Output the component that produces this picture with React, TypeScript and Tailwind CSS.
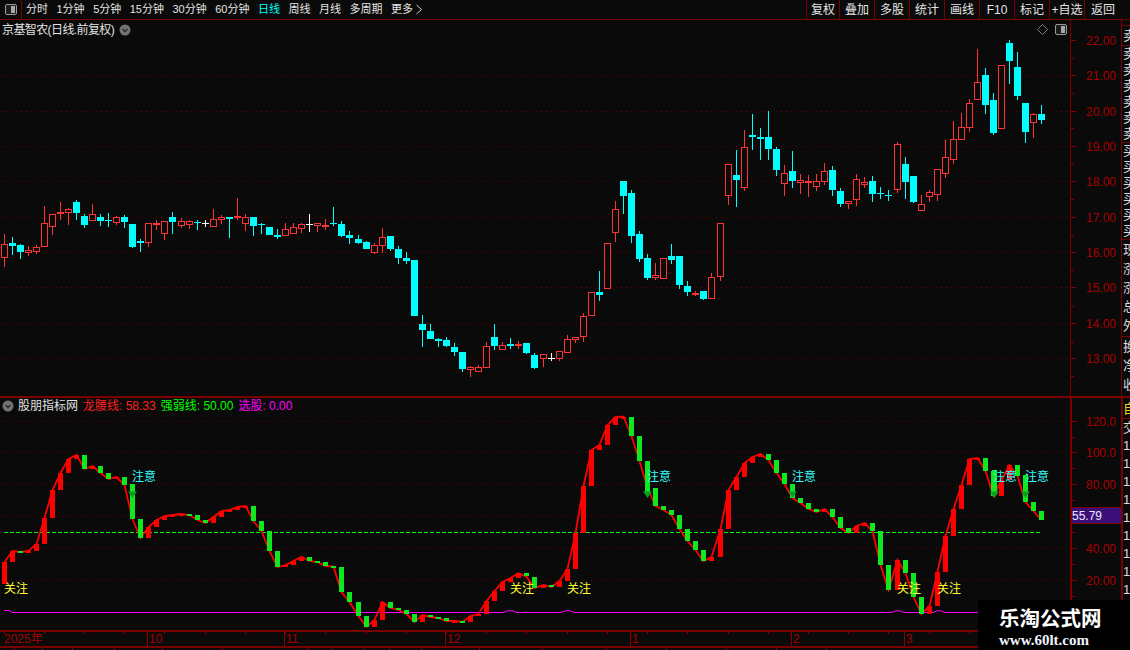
// candle rows are screen y values read off the chart: [bodyTop, bodyBottom, wickTop, wickBottom, kind]
type Kind = "r" | "c" | "w";
type Row = [number, number, number, number, Kind];

const rows = (yOff: number, list: Row[]): Row[] =>
  list.map(([a, b, c, d, k]) => [yOff + a / 3, yOff + b / 3, yOff + c / 3, yOff + d / 3, k]);

const candles: Row[] = [
  ...rows(190, [
    [162, 203, 132, 230, "r"], [159, 167, 141, 195, "c"], [165, 186, 162, 207, "c"], [180, 188, 168, 198, "r"],
    [172, 185, 165, 192, "r"], [99, 170, 48, 170, "r"], [72, 110, 72, 135, "r"], [67, 72, 36, 90, "r"],
    [57, 68, 54, 105, "r"], [36, 69, 30, 90, "c"], [78, 105, 72, 114, "c"], [72, 93, 42, 93, "r"],
    [81, 93, 72, 108, "c"], [90, 93, 69, 111, "c"], [81, 99, 78, 105, "r"], [81, 96, 75, 114, "c"],
    [102, 171, 102, 174, "c"], [154, 158, 147, 186, "c"], [99, 159, 99, 171, "r"], [99, 104, 90, 120, "r"],
    [93, 132, 93, 150, "r"], [81, 96, 66, 132, "c"], [93, 108, 84, 114, "r"], [93, 105, 90, 117, "r"],
    [96, 99, 90, 120, "c"], [99, 102, 90, 111, "w"], [87, 111, 57, 111, "r"], [81, 90, 75, 102, "r"],
    [81, 87, 81, 144, "c"], [78, 83, 24, 90, "r"], [81, 102, 72, 123, "r"], [81, 108, 81, 138, "c"],
    [102, 105, 99, 132, "c"], [111, 135, 111, 135, "c"], [135, 141, 117, 147, "c"],
    [118, 137, 99, 137, "r"], [112, 131, 99, 131, "r"], [103, 116, 99, 129, "r"], [102, 105, 72, 126, "w"],
    [100, 107, 100, 126, "r"], [105, 110, 87, 120, "r"], [99, 102, 51, 108, "c"], [102, 138, 93, 141, "c"],
    [135, 144, 123, 162, "c"], [147, 159, 135, 162, "c"], [156, 177, 153, 177, "c"], [165, 189, 159, 192, "r"],
    [141, 168, 114, 189, "r"], [138, 177, 138, 183, "c"], [177, 204, 168, 222, "c"], [204, 213, 186, 222, "c"],
    [210, 378, 210, 378, "c"], [402, 420, 375, 471, "c"], [423, 447, 402, 447, "c"], [447, 453, 444, 471, "c"],
    [450, 468, 441, 471, "c"], [471, 486, 459, 498, "c"], [486, 537, 486, 546, "c"], [531, 540, 528, 561, "r"],
    [531, 545, 525, 545, "r"], [468, 533, 456, 533, "r"], [441, 468, 402, 480, "c"], [465, 480, 456, 480, "r"],
    [462, 468, 444, 477, "c"], [462, 468, 453, 477, "r"], [459, 489, 459, 492, "c"], [495, 534, 489, 537, "c"],
    [492, 507, 492, 531, "r"], [505, 508, 489, 513, "w"], [483, 507, 483, 513, "r"],
  ]),
  ...rows(280, [
    [178, 220, 165, 220, "r"], [172, 181, 172, 190, "r"], [109, 172, 99, 186, "r"], [37, 109, 37, 109, "r"],
  ]),
  ...rows(100, [
    [576, 585, 513, 603, "c"], [430, 566, 430, 566, "r"], [328, 398, 303, 426, "r"], [243, 288, 243, 342, "c"],
    [279, 408, 270, 429, "c"], [402, 477, 393, 486, "c"], [474, 534, 462, 540, "c"], [526, 533, 489, 540, "r"],
    [475, 536, 475, 536, "r"], [468, 480, 432, 492, "c"], [468, 555, 468, 567, "c"], [558, 576, 543, 588, "c"],
    [579, 585, 573, 588, "r"], [573, 597, 573, 600, "c"], [531, 596, 519, 596, "r"], [370, 530, 370, 543, "r"],
    [193, 287, 193, 315, "r"], [225, 240, 150, 321, "c"], [141, 263, 90, 273, "r"], [105, 111, 42, 150, "c"],
    [111, 117, 84, 180, "c"], [111, 147, 33, 180, "c"], [147, 210, 141, 228, "c"], [219, 251, 195, 288, "r"],
    [213, 243, 153, 264, "c"], [240, 248, 222, 282, "r"], [243, 249, 225, 291, "r"], [244, 260, 222, 273, "r"],
    [213, 245, 189, 255, "r"], [210, 270, 198, 288, "c"],
  ]),
  ...rows(30, [
    [483, 522, 474, 531, "c"], [514, 521, 514, 537, "r"], [448, 509, 432, 528, "r"], [457, 464, 441, 474, "r"],
    [453, 492, 438, 516, "c"], [489, 492, 471, 507, "c"], [496, 499, 480, 513, "c"], [343, 479, 336, 489, "r"],
    [402, 456, 381, 507, "c"], [438, 516, 438, 519, "c"], [523, 542, 495, 542, "r"], [487, 500, 480, 516, "r"],
    [418, 494, 418, 513, "r"], [382, 431, 330, 444, "r"], [328, 389, 273, 402, "r"], [292, 329, 249, 329, "r"],
    [220, 293, 207, 306, "r"], [157, 209, 57, 209, "r"], [135, 225, 114, 252, "c"], [210, 309, 189, 315, "c"],
    [106, 296, 106, 296, "r"], [39, 93, 30, 162, "c"], [111, 198, 66, 210, "c"], [219, 306, 219, 339, "c"],
    [253, 278, 249, 324, "r"], [252, 270, 225, 282, "c"],
  ]),
];

const lineY = [
  ...[516, 483, 486, 483, 462, 384, 300, 249, 207, 195, 237, 228, 249, 267, 261, 285, 387, 444, 411, 390, 378, 375, 372, 375, 390, 399, 381, 363, 360, 351, 348, 393, 423, 483, 531, 525, 513].map((v) => 390 + v / 3),
  ...[470, 483, 486, 498, 500, 576, 606, 648, 681, 660, 606, 624, 630, 642, 666, 645, 651, 654, 663, 663, 666, 648, 642, 603, 573, 546, 534, 520, 530, 564, 555, 561, 543, 507, 400, 258, 150, 135, 75, 51,
    50, 108, 183, 264, 318, 330, 345, 387, 423, 450, 483, 471, 387, 270, 231, 189, 171, 162, 180, 219, 252, 294, 309, 327, 336, 327, 351, 384, 399, 378, 369, 393, 495, 570, 480, 519, 591].map((v) => 400 + v / 3),
  ...[672, 648, 546, 438, 357, 285, 207, 204, 243, 318, 270, 225, 258, 336, 363, 390].map((v) => 390 + v / 3),
];

const xOf = (i: number) => 4 + 8 * i + Math.floor((i + 1) / 22.38);

const cjk = "font-['Liberation_Sans','Noto_Sans_CJK_SC',sans-serif]";

const leftTabs = ["分时", "1分钟", "5分钟", "15分钟", "30分钟", "60分钟", "日线", "周线", "月线", "多周期"];
const rightTabs = ["复权", "叠加", "多股", "统计", "画线", "F10", "标记", "+自选"];

function PanelIcon({ size = 12 }: { size?: number }) {
  return (
    <svg width={size} height={size - 1} viewBox="0 0 12 11">
      <rect x="0.5" y="0.5" width="11" height="10" rx="1.5" fill="#1c1c1c" stroke="#9a9a9a" />
      <rect x="6" y="2" width="4" height="7" fill="#a8a8a8" />
    </svg>
  );
}

function RoundChevron() {
  return (
    <svg width="12" height="12" viewBox="0 0 12 12" className="shrink-0">
      <circle cx="6" cy="6" r="5.5" fill="#737373" />
      <path d="M3.5 5l2.5 2.5L8.5 5" fill="none" stroke="#2a2a2a" strokeWidth="1.3" />
    </svg>
  );
}

function Toolbar() {
  return (
    <div className={`flex h-5 shrink-0 border-b border-[#7a0000] text-[11px] text-[#e4e4e4] ${cjk}`}>
      <div className="flex w-[22px] items-center justify-center border-r border-[#7a0000]">
        <PanelIcon />
      </div>
      <div className="flex items-center gap-[8.5px] pl-[4px]">
        {leftTabs.map((t) => (
          <span key={t} className={t === "日线" ? "text-[#00ffff]" : ""}>
            {t}
          </span>
        ))}
        <span className="flex items-center gap-[3px]">
          更多
          <svg width="6" height="11" viewBox="0 0 6 11">
            <path d="M0.5 1l5 4.5-5 4.5" fill="none" stroke="#cfcfcf" />
          </svg>
        </span>
      </div>
      <div className="ml-auto flex">
        {rightTabs.map((t) => (
          <span key={t} className={`flex h-full items-center justify-center border-l border-[#7a0000] text-[12px] ${t === "复权" ? "w-[33px]" : "w-[35px]"}`}>
            {t}
          </span>
        ))}
        <span className="flex h-full w-[46px] items-center border-l border-[#7a0000] pl-[6px] text-[12px]">返回</span>
      </div>
    </div>
  );
}

function DottedGrid({ ys }: { ys: number[] }) {
  return (
    <>
      {ys.map((y) => (
        <line key={y} x1="1" x2="1070" y1={y + 0.5} y2={y + 0.5} stroke="#6e0000" strokeDasharray="1 4" />
      ))}
    </>
  );
}

function PriceChart() {
  return (
    <svg width="1070" height="376" viewBox="0 20 1070 376" className="shrink-0">
      <DottedGrid ys={[75, 111, 146, 181, 217, 252, 287, 323, 358]} />
      {candles.map(([top, bottom, wickTop, wickBottom, kind], i) => {
        const x = xOf(i);
        const t = Math.round(top);
        const b = Math.round(bottom);
        const color = kind === "r" ? "#ff3333" : kind === "c" ? "#00ffff" : "#ffffff";
        return (
          <g key={i}>
            <line x1={x + 0.5} x2={x + 0.5} y1={Math.round(wickTop)} y2={Math.round(wickBottom)} stroke={color} />
            {kind === "r" ? (
              <rect x={x - 2.5} y={t + 0.5} width="6" height={Math.max(b - t - 1, 1)} fill="#0a0a0a" stroke={color} />
            ) : (
              <rect x={x - 3} y={t} width="7" height={Math.max(b - t, 1)} fill={color} />
            )}
          </g>
        );
      })}
    </svg>
  );
}

const arrows = [
  { x: 132, top: 484 },
  { x: 647, top: 488 },
  { x: 792, top: 484 },
  { x: 994, top: 470 },
  { x: 1025, top: 475 },
];

const watchLabels = [
  { x: 4, y: 593 }, { x: 510, y: 593 }, { x: 567, y: 593 }, { x: 897, y: 593 }, { x: 937, y: 593 },
];
const alertLabels = [
  { x: 132, y: 481 }, { x: 647, y: 481 }, { x: 792, y: 481 }, { x: 993, y: 481 }, { x: 1025, y: 481 },
];

function IndicatorChart() {
  const pts = lineY.map((y, i) => `${xOf(i) + 0.5},${y}`).join(" ");
  return (
    <svg width="1070" height="232" viewBox="0 398 1070 232" className="shrink-0">
      <DottedGrid ys={[421, 452, 484, 516, 548, 580]} />
      <line x1="4" x2="1040" y1="532.5" y2="532.5" stroke="#00ff00" strokeDasharray="4 2" />
      <polyline
        points="4,610.5 9,610.5 12,612.5 503,612.5 508,610.8 513,610.8 517,612.5 560,612.5 566,610.8 570,610.8 574,612.5 891,612.5 896,610.8 900,610.8 904,612.5 933,612.5 937,610.8 941,610.8 945,612.5 1070,612.5"
        fill="none"
        stroke="#ff00ff"
      />
      <polyline points={pts} fill="none" stroke="#ff0000" strokeWidth="1.8" />
      {lineY.map((y, i) => {
        const prev = i === 0 ? 390 + 582 / 3 : lineY[i - 1];
        const up = y <= prev;
        const top = Math.round(Math.min(y, prev));
        const h = Math.max(Math.round(Math.abs(y - prev)), 2);
        return <rect key={i} x={xOf(i) - 2} y={top} width="5" height={h} fill={up ? "#ff0000" : "#0ee81e"} />;
      })}
      {arrows.map((a) => (
        <g key={a.x}>
          <rect x={a.x - 2} y={a.top} width="5" height={492 - a.top} fill="#0ee81e" />
          <polygon points={`${a.x - 4},491.5 ${a.x + 5},491.5 ${a.x + 0.5},498`} fill="#0b9c22" />
        </g>
      ))}
      {watchLabels.map((l) => (
        <text key={l.x} x={l.x} y={l.y} className={`fill-[#ffff33] text-[12px] ${cjk}`}>
          关注
        </text>
      ))}
      {alertLabels.map((l) => (
        <text key={l.x} x={l.x} y={l.y} className={`fill-[#33ffff] text-[12px] ${cjk}`}>
          注意
        </text>
      ))}
    </svg>
  );
}

const priceTicks = [40, 75, 111, 146, 181, 217, 252, 287, 323, 358];
const priceLabels = ["22.00", "21.00", "20.00", "19.00", "18.00", "17.00", "16.00", "15.00", "14.00", "13.00"];
const priceMinor = [58, 93, 128, 163, 199, 235, 270, 306, 342, 376];

function PriceAxis() {
  return (
    <svg width="50" height="376" viewBox="0 20 50 376" className="shrink-0">
      {priceMinor.map((y) => (
        <line key={y} x1="0" x2="3" y1={y + 0.5} y2={y + 0.5} stroke="#8a0000" />
      ))}
      {priceTicks.map((y, i) => (
        <g key={y}>
          <line x1="0" x2="5" y1={y + 0.5} y2={y + 0.5} stroke="#8a0000" />
          <text x="15" y={y + 5} className={`fill-[#a80000] text-[12px] ${cjk}`}>
            {priceLabels[i]}
          </text>
        </g>
      ))}
    </svg>
  );
}

const indTicks = [
  { y: 421, label: "120.0" },
  { y: 452, label: "100.0" },
  { y: 484, label: "80.00" },
  { y: 548, label: "40.00" },
  { y: 580, label: "20.00" },
];

function IndicatorAxis() {
  return (
    <div className="relative w-[49px] shrink-0">
      <svg width="49" height="232" viewBox="0 398 49 232">
        {[437, 468, 500, 532, 564, 596].map((y) => (
          <line key={y} x1="0" x2="3" y1={y + 0.5} y2={y + 0.5} stroke="#8a0000" />
        ))}
        {indTicks.map((t) => (
          <g key={t.y}>
            <line x1="0" x2="5" y1={t.y + 0.5} y2={t.y + 0.5} stroke="#8a0000" />
            <text x="14" y={t.y + 5} className={`fill-[#a80000] text-[12px] ${cjk}`}>
              {t.label}
            </text>
          </g>
        ))}
      </svg>
      <div className={`absolute left-0 top-[109px] flex h-[17px] w-[49px] items-center border-y border-[#7a0000] bg-[#3c0f78] text-[12px] text-[#e8e8ff] ${cjk}`}>
        55.79
      </div>
    </div>
  );
}

const sideGroups: { chars: string; h: number; lh: string }[] = [
  { chars: "卖", h: 20, lh: "leading-[20px]" },
  { chars: "卖卖卖卖卖卖", h: 97, lh: "leading-[16px]" },
  { chars: "买买买买买买", h: 97, lh: "leading-[16px]" },
  { chars: "现涨涨总外", h: 97, lh: "leading-[19px]" },
  { chars: "换净收", h: 60, lh: "leading-[19px]" },
];

function SideColumn() {
  return (
    <div className={`w-[9px] shrink-0 overflow-hidden border-l border-[#7a0000] pt-[5px] text-[13px] text-[#dcdcdc] ${cjk}`}>
      {sideGroups.map((g, i) => (
        <div key={i} style={{ height: g.h }} className={`w-[20px] overflow-hidden border-t border-[#7a0000] pl-[1px] ${g.lh}`}>
          {g.chars.split("").map((c, j) => (
            <div key={j}>{c}</div>
          ))}
        </div>
      ))}
    </div>
  );
}

function SideColumnLower() {
  return (
    <div className={`w-[9px] shrink-0 overflow-hidden border-l-2 border-[#7a0000] text-[13px] text-[#dcdcdc] ${cjk}`}>
      <div className="h-[21px] w-[20px] border-b border-[#7a0000] leading-[21px] text-[#e0d020]">自</div>
      <div className="h-[18px] w-[20px] leading-[18px]">交</div>
      {[0, 1, 2, 3, 4, 5, 6, 7, 8].map((i) => (
        <div key={i} className="h-[18px] leading-[18px]">
          1
        </div>
      ))}
    </div>
  );
}

const months = [
  { x: 147, t: "10" },
  { x: 284, t: "11" },
  { x: 445, t: "12" },
  { x: 630, t: "1" },
  { x: 791, t: "2" },
  { x: 904, t: "3" },
];

function DateAxis() {
  const minor = Array.from({ length: 26 }, (_, i) => xOf(i * 5));
  return (
    <svg width="1130" height="14" viewBox="0 632 1130 14" className="block shrink-0">
      {minor.map((x) => (
        <line key={x} x1={x + 0.5} x2={x + 0.5} y1="632" y2="634" stroke="#8a0000" />
      ))}
      <text x="4" y="643" className={`fill-[#a80000] text-[12px] ${cjk}`}>
        2025年
      </text>
      {months.map((m) => (
        <g key={m.x}>
          <line x1={m.x + 0.5} x2={m.x + 0.5} y1="632" y2="646" stroke="#8a0000" />
          <text x={m.x + 2} y="643" className={`fill-[#a80000] text-[12px] ${cjk}`}>
            {m.t}
          </text>
        </g>
      ))}
    </svg>
  );
}

const bottomTabs = [
  { w: 15, t: "" }, { w: 28, t: "指标" }, { w: 30, t: "" }, { w: 42, t: "模" }, { w: 48, t: "" },
  { w: 60, t: "" }, { w: 85, t: "" }, { w: 24, t: "" }, { w: 32, t: "" }, { w: 26, t: "" },
  { w: 32, t: "" }, { w: 58, t: "" }, { w: 63, t: "" }, { w: 64, t: "" }, { w: 60, t: "" },
  { w: 60, t: "短线" }, { w: 50, t: "" }, { w: 50, t: "" },
];

function BottomTabs() {
  return (
    <div className={`flex h-[2px] shrink-0 overflow-hidden text-[12px] leading-[18px] text-[#e8e8e8] ${cjk}`}>
      {bottomTabs.map((b, i) => (
        <div key={i} style={{ width: b.w }} className="shrink-0 border-r border-[#7a0000] pl-2">
          {b.t}
        </div>
      ))}
    </div>
  );
}

export default function App() {
  return (
    <div className={`relative flex h-[650px] w-[1130px] flex-col overflow-hidden bg-[#0a0a0a] ${cjk}`}>
      <Toolbar />
      <div className="relative flex h-[376px] shrink-0">
        <PriceChart />
        <div className="w-[51px] shrink-0 border-l border-[#7a0000]">
          <PriceAxis />
        </div>
        <SideColumn />
        <div className="absolute left-[2px] top-[2px] flex items-center gap-[5px] text-[12px] leading-[16px] text-[#e2e2e2]">
          <span className="tracking-[-0.6px]">京基智农(日线.前复权)</span>
          <RoundChevron />
        </div>
        <div className="absolute left-[1037px] top-[4px] flex items-center gap-[7px]">
          <svg width="11" height="11" viewBox="0 0 11 11">
            <path d="M5.5 0.5l5 5-5 5-5-5z" fill="none" stroke="#7a7a7a" />
          </svg>
          <PanelIcon />
        </div>
      </div>
      <div className="relative flex h-[234px] shrink-0 border-t-2 border-[#7a0000]">
        <IndicatorChart />
        <div className="border-l-2 border-[#7a0000]">
          <IndicatorAxis />
        </div>
        <SideColumnLower />
        <div className="absolute left-[2px] top-0 flex items-center text-[12px] leading-[16px]">
          <RoundChevron />
          <span className="ml-[4px] text-[#e2e2e2]">股朋指标网</span>
          <span className="ml-[5px] text-[#ff2020]">龙腰线: 58.33</span>
          <span className="ml-[5px] text-[#00ff00]">强弱线: 50.00</span>
          <span className="ml-[5px] text-[#ff00ff]">选股: 0.00</span>
        </div>
      </div>
      <div className="shrink-0 border-y-2 border-[#7a0000]">
        <DateAxis />
      </div>
      <BottomTabs />
      <div className="absolute bottom-0 right-0 flex h-[50px] w-[152px] flex-col bg-black pl-[21px] pt-[7px]">
        <span className="text-[20.5px] font-bold leading-[24px] text-white">乐淘公式网</span>
        <span className="mt-[1px] font-['Liberation_Serif',serif] text-[15px] font-bold leading-[16px] text-[#f0f4ff]">www.60lt.com</span>
      </div>
    </div>
  );
}
